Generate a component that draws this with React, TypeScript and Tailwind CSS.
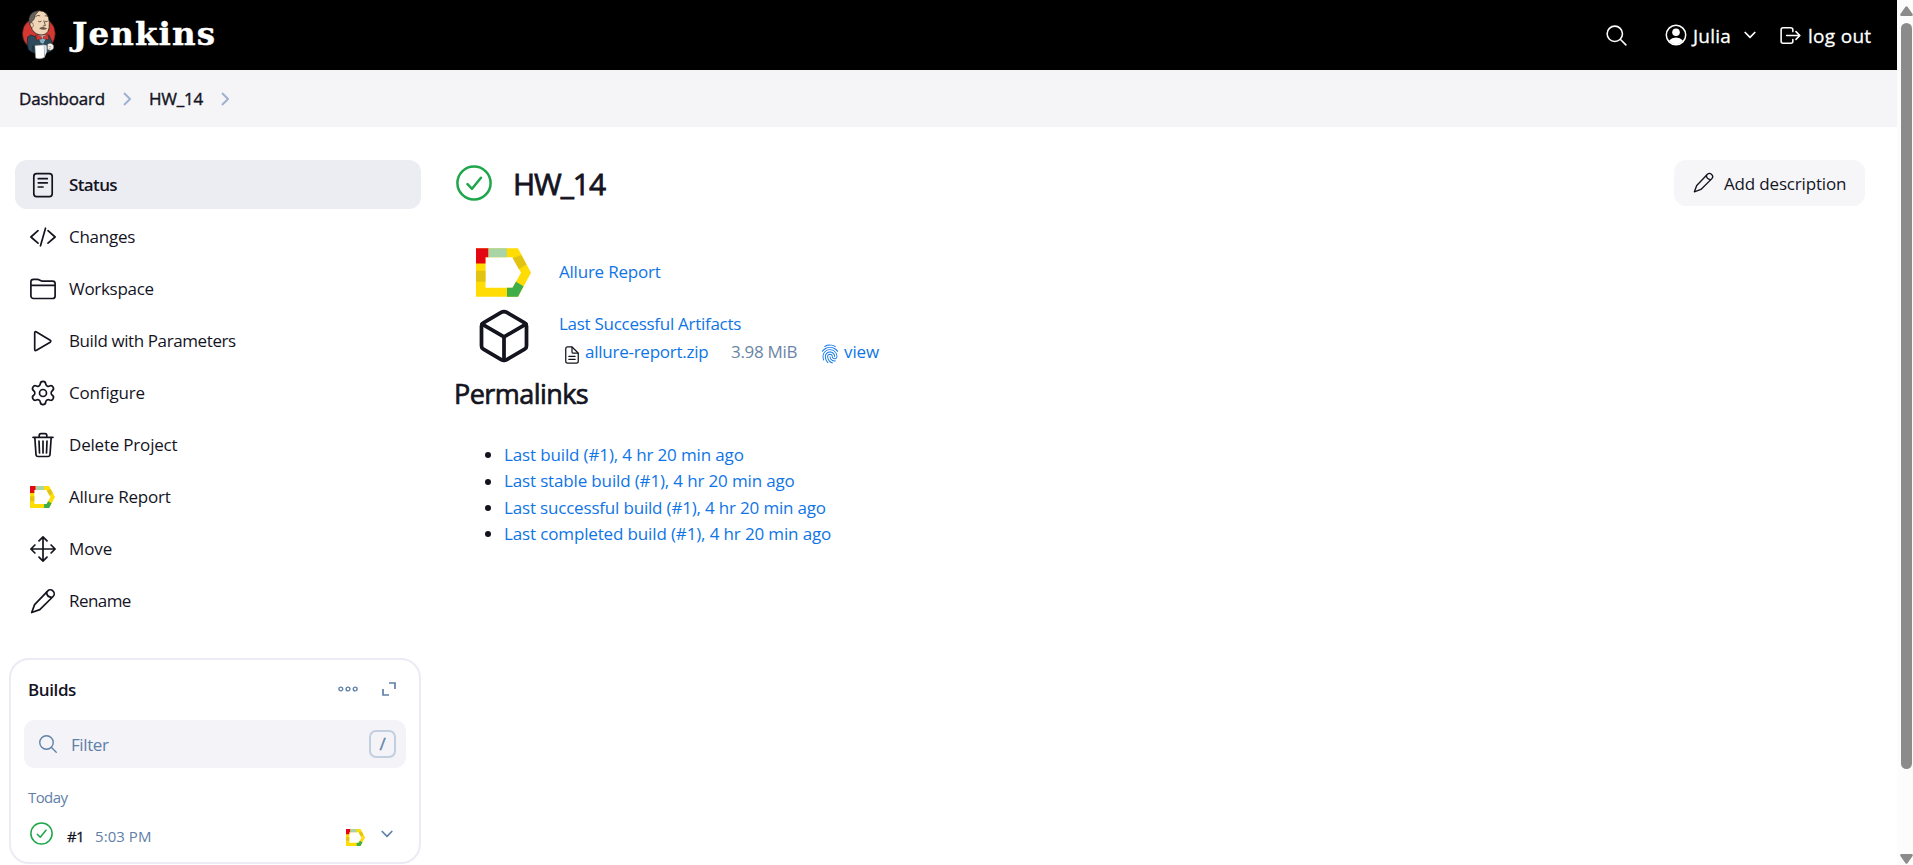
import type { ReactNode } from "react";
import { IoCubeOutline, IoDocumentTextOutline, IoFingerPrintOutline, IoLogOutOutline, IoSearchOutline } from "react-icons/io5";
import { Settings } from "lucide-react";

function Stroke({ children, className = "size-[26px]" }: { children: ReactNode; className?: string }) {
  return (
    <svg viewBox="0 0 26 26" className={`shrink-0 ${className}`} fill="none" stroke="currentColor" strokeWidth="1.7" strokeLinecap="round" strokeLinejoin="round">
      {children}
    </svg>
  );
}

function Pencil({ className }: { className?: string }) {
  return (
    <Stroke className={className}>
      <path d="M1.700 24.500 4.600 16.600 17.600 3.100a3.800 3.800 0 0 1 5.500 5.400L9.800 21.600Z" />
      <path d="M16.600 4.400c.2 3 2 4.800 5 5" />
    </Stroke>
  );
}

function AllureLogo({ className }: { className: string }) {
  return (
    <svg viewBox="0 0 55 48.500" className={`shrink-0 ${className}`}>
      <path fillRule="evenodd" fill="#ffdc04" d="M0 0H42L55 24.500 42 48.500H0ZM9.500 9V39.500H36.500L45 24.500 36.500 9Z" />
      <path fill="#e30613" d="M0 0H12.500V9H9.500V15.200H0Z" />
      <path fill="#a8d4a6" d="M12.500 0H30.800V9H12.500Z" />
      <path fill="#e2c314" d="M0 22.500H9.500V33.500H0ZM45.500 7 50.400 16.200 43 21 36.600 9.700Z" />
      <path fill="#3fae49" d="M31 39.500H36.500L40 33.500 47.500 38 42 48.500H31Z" />
    </svg>
  );
}

function Mascot() {
  return (
    <svg viewBox="30 30 110 152" className="h-[50px] w-[37px] shrink-0" strokeLinejoin="round">
      <ellipse cx="86" cy="102" rx="50" ry="50" fill="#d33833" stroke="#4a1512" strokeWidth="2" />
      <path d="M52 112 62 106 88 116 116 106 125 124 122 156Q92 170 64 158L54 150Q49 127 52 112Z" fill="#2f4a5b" stroke="#14202a" strokeWidth="2" />
      <path d="M78 108 98 132 114 106Z" fill="#e7edf1" />
      <path d="M86 116 106 116 100 132 92 130Z" fill="#81b0c4" />
      <path d="M59 72Q55 36 86 32 116 32 118 68 120 104 96 106 76 106 66 90Z" fill="#f0d6b7" stroke="#29231f" strokeWidth="2.500" />
      <path d="M86 32Q60 34 56 56 54 68 60 76L66 64Q74 60 75 46Z" fill="#66605c" stroke="#2b2928" strokeWidth="1.500" />
      <path d="M59 72Q62 66 68 70 72 80 66 84 60 82 59 72Z" fill="#f0d6b7" stroke="#3a302a" strokeWidth="1.500" />
      <path d="M76 50Q83 44 90 48M104 48Q109 46 113 50M84 64Q89 68 94 64M104 64Q108 67 113 64M101 62 106 77 98 79" fill="none" stroke="#3a302a" strokeWidth="2.300" />
      <path d="M87 86Q98 77 112 87 99 94 87 86Z" fill="#6b5849" />
      <path d="M76 106 94 111 96 117 80 122ZM98 111 114 105 116 121 100 117Z" fill="#d33833" stroke="#5b1413" strokeWidth="1.500" />
      <path d="M66 138 74 136 74 160 64 156Z" fill="#233845" />
      <path d="M74 138 102 136 104 174Q90 182 76 176Z" fill="#fff" stroke="#777" strokeWidth="1.500" />
      <path d="M102 136 110 138 110 158 104 174Z" fill="#dde3e8" />
      <path d="M112 134Q124 126 131 138 134 150 122 153L112 150Z" fill="#f5f0e9" stroke="#3a3a3a" strokeWidth="1.500" />
      <path d="M116 140 124 142M116 146 122 147" stroke="#777" strokeWidth="1.500" />
    </svg>
  );
}

function SuccessIcon({ className, width }: { className: string; width: number }) {
  return (
    <svg viewBox="0 0 36 36" className={`shrink-0 text-[#1ea64b] ${className}`} fill="none" stroke="currentColor" strokeWidth={width} strokeLinecap="round" strokeLinejoin="round">
      <circle cx="18" cy="18" r="16.600" />
      <path d="m11.500 19.200 4.500 4.600 9-11" />
    </svg>
  );
}

function Chevron({ className }: { className: string }) {
  return (
    <svg viewBox="0 0 12 8" className={`shrink-0 ${className}`} fill="none" stroke="currentColor" strokeWidth="1.700" strokeLinecap="round" strokeLinejoin="round">
      <path d="m1.200 1.500 4.800 4.800 4.800-4.800" />
    </svg>
  );
}

function Separator() {
  return (
    <svg viewBox="0 0 8 14" className="h-[14px] w-2 shrink-0 text-[#9fb3cf]" fill="none" stroke="currentColor" strokeWidth="2">
      <path d="m1 1 6 6-6 6" />
    </svg>
  );
}

const menu: { label: string; text: string; icon: ReactNode }[] = [
  {
    label: "Status",
    text: "font-semibold tracking-[-0.62px]",
    icon: (
      <Stroke>
        <rect x="3.800" y="1.600" width="18.400" height="23" rx="2.800" />
        <path d="M8.300 6.700H17.300M8.300 10.800H17.300M8.300 15H13" />
      </Stroke>
    ),
  },
  {
    label: "Changes",
    text: "tracking-[-0.27px]",
    icon: (
      <Stroke>
        <path d="M8 6.700.900 13 8 19.200M18 6.700 25.100 13 18 19.200M15.500 4.200 10.500 21.800" />
      </Stroke>
    ),
  },
  {
    label: "Workspace",
    text: "tracking-[-0.3px]",
    icon: (
      <Stroke>
        <path d="M.900 20V5.800A2.500 2.500 0 0 1 3.400 3.300H7.500Q8.500 3.300 9.500 4L10.500 4.600Q11.300 5.100 12.300 5.100H22.600A2.500 2.500 0 0 1 25.100 7.600V20A2.500 2.500 0 0 1 22.600 22.500H3.400A2.500 2.500 0 0 1 .900 20ZM.900 9.300H25.100" />
      </Stroke>
    ),
  },
  {
    label: "Build with Parameters",
    text: "tracking-[-0.4px]",
    icon: (
      <Stroke>
        <path d="M4.700 5V21.300Q4.700 23.300 6.500 22.300L20.200 14.200Q21.400 13.200 20.200 12.200L6.500 4Q4.700 3 4.700 5Z" />
      </Stroke>
    ),
  },
  { label: "Configure", text: "tracking-[-0.17px]", icon: <Settings className="-mx-px size-[28px] shrink-0" strokeWidth={1.45} /> },
  {
    label: "Delete Project",
    text: "tracking-[-0.2px]",
    icon: (
      <Stroke>
        <path d="M3 5.300H23M4.800 5.300 6 22.500Q6.200 24.500 8 24.500H18Q19.800 24.500 20 22.500L21.200 5.300M9.200 5.300V3.500Q9.200 1.700 11 1.700H15Q16.800 1.700 16.800 3.500V5.300M13 9V21M9 9 9.500 21M17 9 16.500 21" />
      </Stroke>
    ),
  },
  { label: "Allure Report", text: "tracking-[-0.22px]", icon: <AllureLogo className="mr-px h-[22px] w-[25px]" /> },
  {
    label: "Move",
    text: "tracking-[-0.1px]",
    icon: (
      <Stroke>
        <path d="M13 .900V25.100M.900 13H25.100M9 4.900 13 .900 17 4.900M9 21.100 13 25.100 17 21.100M4.900 9 .900 13 4.900 17M21.100 9 25.100 13 21.100 17" />
      </Stroke>
    ),
  },
  { label: "Rename", text: "tracking-[-0.56px]", icon: <Pencil /> },
];

const permalinks = [
  { label: "Last build (#1), 4 hr 20 min ago", text: "tracking-[-0.14px]" },
  { label: "Last stable build (#1), 4 hr 20 min ago", text: "tracking-[-0.15px]" },
  { label: "Last successful build (#1), 4 hr 20 min ago", text: "tracking-[-0.18px]" },
  { label: "Last completed build (#1), 4 hr 20 min ago", text: "tracking-[-0.14px]" },
];

function Header() {
  return (
    <header className="flex h-[70px] items-center bg-black pr-[24px] pl-[20px] text-white">
      <Mascot />
      <span className="ml-[15px] pb-[3px] font-['DejaVu_Serif',serif] text-[32.5px] leading-[50px] font-bold tracking-[1.1px] [-webkit-text-stroke:0.4px_currentColor]">Jenkins</span>
      <div className="ml-auto flex items-center text-[19px] [-webkit-text-stroke:0.3px_currentColor]">
        <IoSearchOutline className="mr-[36px] size-[25px]" />
        <svg viewBox="0 0 22 22" className="mr-[6px] size-[22px]">
          <circle cx="11" cy="11" r="9.700" fill="none" stroke="currentColor" strokeWidth="1.500" />
          <circle cx="11" cy="8.300" r="3.800" fill="currentColor" />
          <path d="M4 16.500Q7 13.600 11 13.600T18 16.500Q15.500 20.200 11 20.200T4 16.500Z" fill="currentColor" />
        </svg>
        <span className="mt-[2px] w-[39px] tracking-[0.2px]">Julia</span>
        <Chevron className="mr-[22px] ml-[12px] h-2 w-3" />
        <IoLogOutOutline className="mr-[5px] size-[25px]" />
        <span className="mt-[2px] w-[65px] whitespace-nowrap tracking-[0.3px]">log out</span>
      </div>
    </header>
  );
}

function Builds() {
  return (
    <section className="mt-[33px] ml-[9px] h-[206px] w-[412px] rounded-[20px] border-2 border-[#ebebf3] px-[13px] pt-[11px]">
      <div className="flex h-[36px] items-center pr-[10px] pl-[4px] text-[#5f80a8]">
        <h2 className="mt-px mr-auto text-[17px] font-semibold tracking-[-0.4px] text-[#14141f]">Builds</h2>
        <svg viewBox="0 0 20 6" className="mr-[24px] h-[6px] w-5" fill="none" stroke="currentColor" strokeWidth="1.400">
          <circle cx="2.800" cy="3" r="1.900" />
          <circle cx="10" cy="3" r="1.900" />
          <circle cx="17.200" cy="3" r="1.900" />
        </svg>
        <svg viewBox="0 0 14 14" className="size-[14px]" fill="none" stroke="currentColor" strokeWidth="1.700">
          <path d="M7 1H13V7M1 7V13H7" />
        </svg>
      </div>
      <div className="mt-[13px] flex h-12 items-center rounded-[11px] bg-[#f3f3f8] pr-[10px] pl-[13px] text-[#5f80a8]">
        <IoSearchOutline className="size-[22px]" />
        <span className="mt-px mr-auto ml-[12px] text-[17px] tracking-[-0.4px]">Filter</span>
        <div className="flex h-7 w-[27px] items-center justify-center rounded-[7px] border-2 border-[#c2cfde] text-[17px] leading-none [-webkit-text-stroke:0.3px_currentColor]">
          <span className="mb-px">/</span>
        </div>
      </div>
      <p className="mt-[18px] pl-[4px] text-[15px] leading-[22px] tracking-[-0.6px] text-[#5f80a8]">Today</p>
      <div className="mt-[10px] flex h-[34px] items-center pr-[13px] pl-[6px] text-[15px] text-[#5f80a8]">
        <SuccessIcon className="mb-[4px] size-[23px]" width={2.4} />
        <span className="mt-[2px] ml-[14px] w-[17px] tracking-[-0.6px] text-[#14141f] [-webkit-text-stroke:0.3px_currentColor]">#1</span>
        <span className="mt-[2px] mr-auto ml-[11px] tracking-[0.06px]">5:03 PM</span>
        <AllureLogo className="mt-[4px] mr-[16px] h-[17px] w-[19px]" />
        <Chevron className="mb-[3px] h-2 w-3" />
      </div>
    </section>
  );
}

function Sidebar() {
  return (
    <aside className="w-[421px] shrink-0 pt-[33px]">
      <nav className="flex flex-col gap-[3px] pl-[15px]">
        {menu.map((m, i) => (
          <a key={m.label} className={`flex h-[49px] items-center rounded-[12px] pl-[15px] text-[17px] ${i === 0 ? "bg-[#ecedf3]" : ""}`}>
            {m.icon}
            <span className={`ml-[13px] ${m.text}`}>{m.label}</span>
          </a>
        ))}
      </nav>
      <Builds />
    </aside>
  );
}

function Main() {
  return (
    <main className="flex-1 pt-[33px] pr-[32px] pl-[34px]">
      <div className="flex h-[46px] items-center">
        <SuccessIcon className="mb-px ml-px size-9" width={2.5} />
        <h1 className="mt-[2px] mr-auto ml-[21px] text-[30px] leading-[46px] font-normal tracking-[-1.05px] [-webkit-text-stroke:0.8px_currentColor]">HW_14</h1>
        <button className="flex h-[46px] w-[191px] items-center rounded-[12px] bg-[#f6f6f9] pl-[19px] text-[17px] tracking-[-0.17px]">
          <Pencil className="mb-[2px] size-[21px]" />
          <span className="mt-px ml-[10px] whitespace-nowrap">Add description</span>
        </button>
      </div>
      <div className="mt-[39px] flex h-[54px] items-center pl-[21px] text-[17px]">
        <AllureLogo className="h-[49px] w-[55px]" />
        <a className="ml-[28px] tracking-[-0.22px] text-[#0f75e6]">Allure Report</a>
      </div>
      <div className="mt-[5px] flex h-[64px] pl-[19px] text-[17px] leading-[28px] text-[#0f75e6]">
        <IoCubeOutline className="mt-[2px] size-[60px] shrink-0 text-[#14141f]" />
        <div className="ml-[25px] pt-[6px]">
          <a className="block tracking-[-0.28px]">Last Successful Artifacts</a>
          <div className="flex items-center pl-[3px]">
            <IoDocumentTextOutline className="mt-[5px] size-[20px] text-[#14141f]" />
            <a className="ml-[3px] w-[123px] whitespace-nowrap tracking-[-0.25px]">allure-report.zip</a>
            <span className="ml-[23px] w-[66px] whitespace-nowrap tracking-[-0.3px] text-[#6b84a6]">3.98 MiB</span>
            <IoFingerPrintOutline className="mt-[3px] ml-[23px] size-[20px]" />
            <a className="ml-[4px] tracking-[-0.1px]">view</a>
          </div>
        </div>
      </div>
      <h2 className="mt-[4px] -ml-px text-[27px] leading-[44px] font-normal tracking-[-0.55px] [-webkit-text-stroke:0.7px_currentColor]">Permalinks</h2>
      <ul className="mt-[26px] text-[17px] leading-[26.4px] text-[#0f75e6]">
        {permalinks.map((p) => (
          <li key={p.label} className="flex items-center pl-[30px]">
            <span className="mr-[13px] size-[6px] rounded-full bg-[#14141f]" />
            <a className={p.text}>{p.label}</a>
          </li>
        ))}
      </ul>
    </main>
  );
}

export default function App() {
  return (
    <div className="flex h-[865px] w-[1913px] overflow-hidden bg-white font-['Open_Sans',sans-serif] text-[#14141f]">
      <div className="flex w-[1897px] flex-col">
        <Header />
        <div className="flex h-[57px] items-center bg-[#f5f5f8] pl-[19px] text-[17px] [-webkit-text-stroke:0.4px_currentColor]">
          <span className="w-[86px] tracking-[-0.2px]">Dashboard</span>
          <span className="mx-[18px] flex"><Separator /></span>
          <span className="w-[54px] tracking-[-0.2px]">HW_14</span>
          <span className="ml-[18px] flex"><Separator /></span>
        </div>
        <div className="flex flex-1">
          <Sidebar />
          <Main />
        </div>
      </div>
      <div className="flex w-4 flex-col items-end bg-[#fcfcfc] pt-[6px] text-[#8b8b8b]">
        <svg viewBox="0 0 13 10" className="h-[10px] w-[13px]" fill="currentColor"><path d="M5.500.800Q6.500-.400 7.500.800L12.600 8Q13.300 10 11.500 10H1.500Q-.300 10 .400 8Z" /></svg>
        <div className="mt-[7px] mr-px h-[746px] w-[11px] rounded-full bg-[#8b8b8b]" />
        <svg viewBox="0 0 13 10" className="mt-[85px] h-[10px] w-[13px] rotate-180" fill="currentColor"><path d="M5.500.800Q6.500-.400 7.500.800L12.600 8Q13.300 10 11.500 10H1.500Q-.300 10 .400 8Z" /></svg>
      </div>
    </div>
  );
}
